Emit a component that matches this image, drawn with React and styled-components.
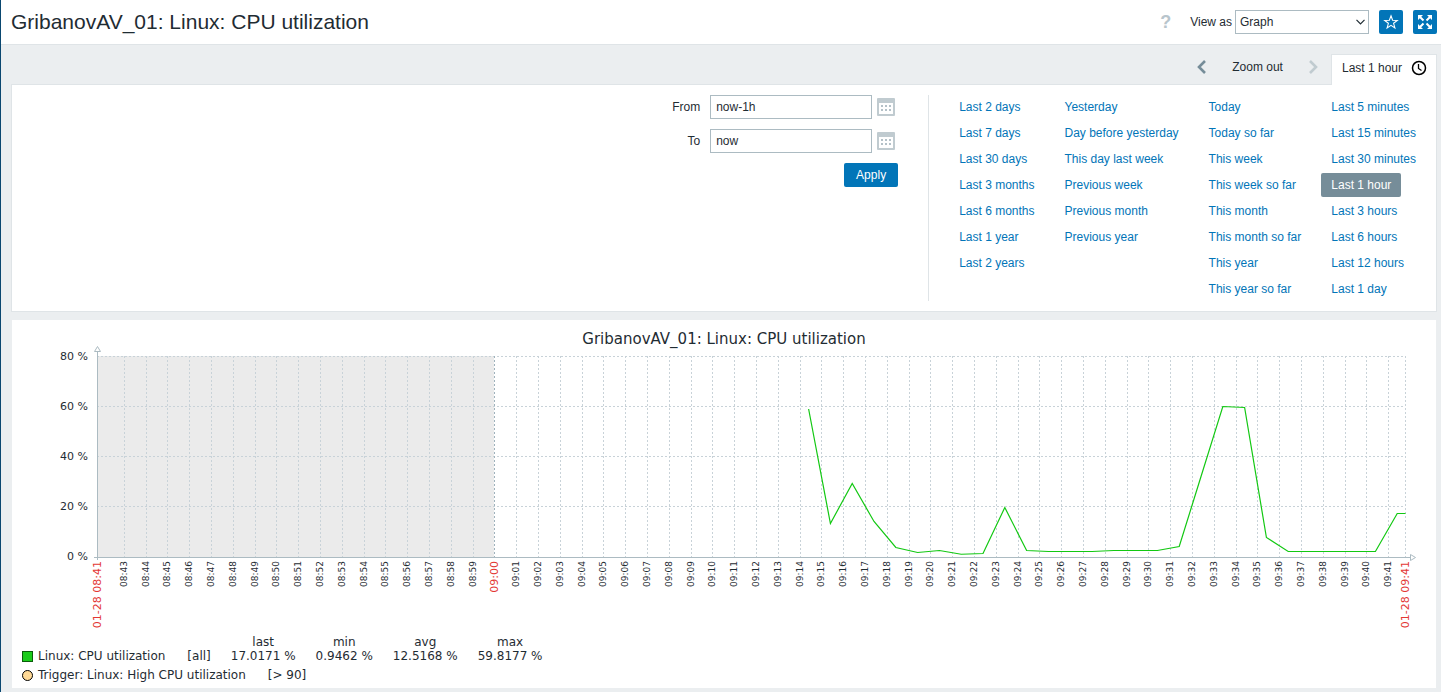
import React, { useLayoutEffect, useRef, useState } from 'react';
import styled, { createGlobalStyle } from 'styled-components';

const GlobalStyle = createGlobalStyle`
  * { box-sizing: border-box; }
  body {
    margin: 0;
    background: #ebeef0;
    color: #1f2c33;
    font: 12px/18px Arial, "Liberation Sans", sans-serif;
  }
  button, input, select { font: inherit; color: inherit; }
`;

const Page = styled.div`
  min-height: 100vh;
  border-left: 1px solid #0a4770;
  padding-bottom: 4px;
`;

const Header = styled.header`
  display: flex;
  align-items: center;
  justify-content: space-between;
  height: 45px;
  padding: 0 4px 0 10px;
  background: #fff;
  border-bottom: 1px solid #dfe4e7;
`;

const Title = styled.h1`
  margin: 0;
  font-size: 21px;
  line-height: 24px;
  font-weight: normal;
`;

const HeaderControls = styled.div`
  display: flex;
  align-items: center;
  gap: 10px;
`;

const HelpLink = styled.a`
  margin-right: 9px;
  color: #b8c5cc;
  font-size: 18px;
  font-weight: bold;
  text-decoration: none;
`;

const ViewField = styled.div`
  display: flex;
  align-items: center;
  gap: 3px;
`;

const SelectWrap = styled.span`
  display: grid;
  align-items: center;
  & > * { grid-area: 1 / 1; }
  & > svg { justify-self: end; margin-right: 4px; pointer-events: none; }
`;

const Select = styled.select`
  appearance: none;
  width: 134px;
  height: 24px;
  padding: 0 4px;
  background: #fff;
  border: 1px solid #acbbc2;
  border-radius: 0;
`;

const IconButton = styled.button`
  display: grid;
  place-items: center;
  width: 24px;
  height: 24px;
  padding: 0;
  background: #0275b8;
  border: 0;
  border-radius: 2px;
`;

const Content = styled.main`
  padding: 9px 4px 0 10px;
`;

const FilterNav = styled.nav`
  display: flex;
  justify-content: flex-end;
  align-items: flex-start;
`;

const ZoomControls = styled.div`
  display: flex;
  align-items: center;
  height: 26px;
`;

const NavButton = styled.button`
  display: flex;
  align-items: center;
  height: 24px;
  padding: 0 12px;
  background: none;
  border: 0;
`;

const TimeTab = styled.a`
  display: flex;
  align-items: center;
  gap: 9px;
  height: 31px;
  margin-bottom: -1px;
  padding: 0 9px 5px 10px;
  background: #fff;
  border: 1px solid #dfe4e7;
  border-bottom: 0;
  color: inherit;
  text-decoration: none;
`;

const FilterPanel = styled.section`
  display: flex;
  justify-content: flex-end;
  padding: 10px 10px;
  background: #fff;
  border: 1px solid #dfe4e7;
`;

const RangeForm = styled.form`
  display: flex;
  flex-direction: column;
  gap: 10px;
  padding-right: 30px;
`;

const FieldRow = styled.div`
  display: grid;
  grid-template-columns: 38px 162px 18px;
  align-items: center;
  gap: 5px;
  padding-right: 3px;
`;

const FieldLabel = styled.label`
  padding-right: 5px;
  text-align: right;
  white-space: nowrap;
`;

const TextInput = styled.input`
  width: 162px;
  height: 24px;
  padding: 0 5px;
  background: #fff;
  border: 1px solid #acbbc2;
`;

const CalendarButton = styled.button`
  width: 18px;
  height: 18px;
  padding: 0;
  background: none;
  border: 0;
  & > svg { display: block; }
`;

const ApplyButton = styled.button`
  align-self: flex-end;
  height: 24px;
  padding: 0 12px;
  background: #0275b8;
  border: 0;
  border-radius: 2px;
  color: #fff;
`;

const Presets = styled.div`
  display: flex;
  gap: 10px;
  min-height: 206px;
  padding-left: 20px;
  border-left: 1px solid #dfe4e7;
`;

const PresetList = styled.ul`
  display: flex;
  flex-direction: column;
  align-items: flex-start;
  gap: 2px;
  margin: 0;
  padding: 0;
  list-style: none;
`;

const PresetLink = styled.a`
  display: block;
  padding: 3px 10px;
  border-radius: 2px;
  background: ${(p) => (p.$selected ? '#768d99' : 'transparent')};
  color: ${(p) => (p.$selected ? '#fff' : '#0275b8')};
  text-decoration: none;
  white-space: nowrap;
`;

const GraphPanel = styled.section`
  margin: 8px 1px 0;
  padding: 10px 0 6px;
  background: #fff;
  font-family: "DejaVu Sans", sans-serif;
`;

const GraphTitle = styled.h2`
  margin: 0;
  font-size: 15px;
  line-height: 18px;
  font-weight: normal;
  text-align: center;
`;

const Plot = styled.svg`
  display: block;
  width: 100%;
  height: 287px;
  overflow: visible;
`;

const Legend = styled.table`
  margin-left: 10px;
  border-collapse: collapse;
  line-height: 14px;
  td, th { padding: 0 20px 0 0; font-weight: normal; text-align: center; white-space: nowrap; }
  th[scope="row"] { padding-right: 22px; }
`;

const Trigger = styled.div`
  display: flex;
  align-items: center;
  gap: 22px;
  margin: 5px 0 0 10px;
  line-height: 14px;
`;

const Item = styled.span`
  display: flex;
  align-items: center;
  gap: 5px;
`;

const Swatch = styled.span`
  width: 11px;
  height: 11px;
  border: 1px solid ${(p) => (p.$round ? '#000' : '#0a5c0a')};
  border-radius: ${(p) => (p.$round ? '50%' : '0')};
  background: ${(p) => p.$color};
`;

const PRESETS = [
  ['Last 2 days', 'Last 7 days', 'Last 30 days', 'Last 3 months', 'Last 6 months', 'Last 1 year', 'Last 2 years'],
  ['Yesterday', 'Day before yesterday', 'This day last week', 'Previous week', 'Previous month', 'Previous year'],
  ['Today', 'Today so far', 'This week', 'This week so far', 'This month', 'This month so far', 'This year', 'This year so far'],
  ['Last 5 minutes', 'Last 15 minutes', 'Last 30 minutes', 'Last 1 hour', 'Last 3 hours', 'Last 6 hours', 'Last 12 hours', 'Last 1 day'],
];

/* CPU load in percent, one sample a minute */
const SAMPLES = [
  59, 13.2, 29.2, 14, 3.6, 1.6, 2.4, 0.9, 1.2, 19.6, 2.4, 2, 2, 2, 2.4, 2.4, 2.4,
  4, 32, 60, 59.6, 7.6, 2, 2, 2, 2, 2, 17.2,
];
const FIRST_SAMPLE = 32.62;
const HOUR_MARK = 18.21;

const LEFT = 85;
const TOP = 8;
const BOTTOM = 209;

const pad = (n) => String(n).padStart(2, '0');

function Chart() {
  const ref = useRef(null);
  const [width, setWidth] = useState(1424);
  useLayoutEffect(() => {
    const measure = () => setWidth(Math.round(ref.current.getBoundingClientRect().width));
    measure();
    window.addEventListener('resize', measure);
    return () => window.removeEventListener('resize', measure);
  }, []);

  const plotWidth = width - 116;
  const right = LEFT + plotWidth;
  const minute = plotWidth / 60;
  const hourX = Math.round(LEFT + HOUR_MARK * minute);
  const ticks = [];
  for (let i = -17; i <= 41; i += 1) {
    const total = 540 + i;
    ticks.push({ x: Math.ceil(hourX + i * minute), label: `${pad(Math.floor(total / 60))}:${pad(total % 60)}`, main: i === 0 });
  }
  const points = SAMPLES.map((v, i) => [LEFT + 0.5 + (FIRST_SAMPLE + i) * minute, 208.5 - v * 2.5]);
  points.push([right + 0.5, points[points.length - 1][1]]);

  return (
    <Plot ref={ref} role="img" aria-label="CPU utilization over the last hour">
      <rect x={LEFT} y={TOP} width={hourX - LEFT} height={BOTTOM - TOP} fill="#ebebeb" />
      <g stroke="#c8d2d8" strokeDasharray="2 2">
        {[8, 58, 108, 158].map((y) => (
          <line key={y} x1={LEFT} x2={right} y1={y + 0.5} y2={y + 0.5} />
        ))}
        {ticks.map((t) => (
          <line key={t.label} x1={t.x + 0.5} x2={t.x + 0.5} y1={TOP} y2={BOTTOM} stroke={t.main ? '#9fb2bc' : undefined} />
        ))}
        <line x1={right + 0.5} x2={right + 0.5} y1={TOP} y2={BOTTOM} />
      </g>
      <g stroke="#acbbc2" fill="#fff">
        <path d={`M${LEFT + 0.5} 4V212M${LEFT - 3} ${BOTTOM + 0.5}H${right + 5}`} />
        <path d={`M${LEFT - 2.5} 3.5h6l-3 -5z`} />
        <path d={`M${right + 5.5} ${BOTTOM - 2.5}v6l5 -3z`} />
      </g>
      <g fontSize="11" fill="#1f2c33" textAnchor="end">
        {[80, 60, 40, 20, 0].map((v) => (
          <text key={v} x={LEFT - 9} y={212 - v * 2.5}>{`${v} %`}</text>
        ))}
      </g>
      <g textAnchor="end">
        {ticks.map((t) => (
          <text
            key={t.label}
            fontSize={t.main ? 11 : 9}
            fill={t.main ? '#e33734' : '#1f2c33'}
            transform={`translate(${t.x + (t.main ? 4 : 3)} 213) rotate(-90)`}
          >
            {t.label}
          </text>
        ))}
        {[[LEFT, '01-28 08:41'], [right, '01-28 09:41']].map(([x, label]) => (
          <text key={label} fontSize="11" fill="#e33734" transform={`translate(${x + 4} 213) rotate(-90)`}>{label}</text>
        ))}
      </g>
      <polyline points={points.map((p) => p.join(',')).join(' ')} fill="none" stroke="#12c812" strokeWidth="1.2" />
    </Plot>
  );
}

function CalendarIcon() {
  return (
    <svg width="18" height="18" viewBox="0 0 18 18">
      <rect width="18" height="18" rx="1" fill="#c0cbd0" />
      <path fill="#fff" d="M2 5h14v11H2z" />
      <path fill="#b4c1c8" d="M4 7h2v2H4zM8 7h2v2H8zM12 7h2v2h-2zM4 11h2v2H4zM8 11h2v2H8zM12 11h2v2h-2z" />
    </svg>
  );
}

function Chevron({ left, color }) {
  return (
    <svg width="12" height="14" viewBox="0 0 12 14" fill="none" stroke={color} strokeWidth="2.6">
      <path d={left ? 'M9 1L3 7l6 6' : 'M3 1l6 6-6 6'} />
    </svg>
  );
}

function RangeField({ id, label, value }) {
  return (
    <FieldRow>
      <FieldLabel htmlFor={id}>{label}</FieldLabel>
      <TextInput id={id} type="text" defaultValue={value} />
      <CalendarButton type="button" aria-label={`${label} date`}><CalendarIcon /></CalendarButton>
    </FieldRow>
  );
}

export default function App() {
  return (
    <Page>
      <GlobalStyle />
      <Header>
        <Title>GribanovAV_01: Linux: CPU utilization</Title>
        <HeaderControls>
          <HelpLink href="#help">?</HelpLink>
          <ViewField>
            <label htmlFor="view-as">View as</label>
            <SelectWrap>
              <Select id="view-as" defaultValue="Graph">
                <option>Graph</option>
                <option>Values</option>
              </Select>
              <svg width="9" height="6" viewBox="0 0 9 6" fill="none" stroke="#1f2c33" strokeWidth="1.2">
                <path d="M.5 .8l4 4 4-4" />
              </svg>
            </SelectWrap>
          </ViewField>
          <IconButton type="button" aria-label="Add to favourites">
            <svg width="16" height="16" viewBox="0 0 16 16" fill="none" stroke="#fff" strokeWidth="1.1">
              <path d="M8 1.8l1.6 4.4 4.7.2-3.7 2.9 1.3 4.6L8 11.3l-3.9 2.6 1.3-4.6L1.7 6.4l4.7-.2z" />
            </svg>
          </IconButton>
          <IconButton type="button" aria-label="Fullscreen">
            <svg width="16" height="16" viewBox="0 0 16 16" fill="#fff" stroke="#fff" strokeWidth="2">
              <path stroke="none" d="M1 1h5L1 6zM15 1v5l-5-5zM1 15v-5l5 5zM15 15h-5l5-5z" />
              <path d="M3 3l3.5 3.5M13 3L9.5 6.5M3 13l3.5-3.5M13 13L9.5 9.5" />
            </svg>
          </IconButton>
        </HeaderControls>
      </Header>
      <Content>
        <FilterNav>
          <ZoomControls>
            <NavButton type="button" aria-label="Earlier"><Chevron left color="#768d99" /></NavButton>
            <NavButton type="button">Zoom out</NavButton>
            <NavButton type="button" aria-label="Later" disabled><Chevron color="#c0cbd0" /></NavButton>
          </ZoomControls>
          <TimeTab href="#time">
            Last 1 hour
            <svg width="16" height="16" viewBox="0 0 16 16" fill="none" stroke="#000" strokeWidth="1.5">
              <circle cx="8" cy="8" r="6.5" />
              <path d="M7.5 4v4.500l3 2" strokeWidth="1.3" />
            </svg>
          </TimeTab>
        </FilterNav>
        <FilterPanel>
          <RangeForm onSubmit={(e) => e.preventDefault()}>
            <RangeField id="from" label="From" value="now-1h" />
            <RangeField id="to" label="To" value="now" />
            <ApplyButton type="submit">Apply</ApplyButton>
          </RangeForm>
          <Presets>
            {PRESETS.map((column) => (
              <PresetList key={column[0]}>
                {column.map((name) => (
                  <li key={name}>
                    <PresetLink href="#range" $selected={name === 'Last 1 hour'}>{name}</PresetLink>
                  </li>
                ))}
              </PresetList>
            ))}
          </Presets>
        </FilterPanel>
        <GraphPanel>
          <GraphTitle>GribanovAV_01: Linux: CPU utilization</GraphTitle>
          <Chart />
          <Legend>
            <thead>
              <tr><td /><td /><th>last</th><th>min</th><th>avg</th><th>max</th></tr>
            </thead>
            <tbody>
              <tr>
                <th scope="row"><Item><Swatch $color="#1acc1a" />Linux: CPU utilization</Item></th>
                <td>[all]</td>
                <td>17.0171 %</td>
                <td>0.9462 %</td>
                <td>12.5168 %</td>
                <td>59.8177 %</td>
              </tr>
            </tbody>
          </Legend>
          <Trigger>
            <Item><Swatch $round $color="#ffd996" />Trigger: Linux: High CPU utilization</Item>
            <span>[&gt; 90]</span>
          </Trigger>
        </GraphPanel>
      </Content>
    </Page>
  );
}
